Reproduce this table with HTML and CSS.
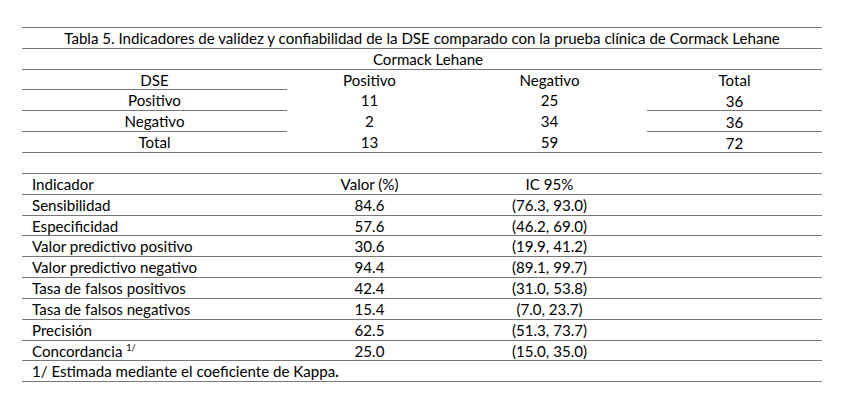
FILE: index.html
```html
<!DOCTYPE html>
<html lang="es">
<head>
<meta charset="utf-8">
<title>Tabla 5</title>
<link rel="stylesheet" href="styles.css">
</head>
<body>
<main class="page">
  <section class="tbl t1">
    <div class="row title">Tabla 5. Indicadores de validez y confiabilidad de la DSE comparado con la prueba clínica de Cormack Lehane</div>
    <div class="row span">Cormack Lehane</div>
    <div class="grid">
      <div class="cell c line">DSE</div>
      <div class="cell c">Positivo</div>
      <div class="cell c">Negativo</div>
      <div class="cell c">Total</div>

      <div class="cell c line">Positivo</div>
      <div class="cell c">11</div>
      <div class="cell c">25</div>
      <div class="cell c line low">36</div>

      <div class="cell c line">Negativo</div>
      <div class="cell c">2</div>
      <div class="cell c">34</div>
      <div class="cell c line low">36</div>

      <div class="cell c line">Total</div>
      <div class="cell c line">13</div>
      <div class="cell c line">59</div>
      <div class="cell c line low">72</div>
    </div>
  </section>

  <section class="tbl t2">
    <div class="grid">
      <div class="cell l line">Indicador</div>
      <div class="cell c line">Valor (%)</div>
      <div class="cell c line">IC 95%</div>
      <div class="cell line"></div>

      <div class="cell l line">Sensibilidad</div>
      <div class="cell c line">84.6</div>
      <div class="cell c line">(76.3, 93.0)</div>
      <div class="cell line"></div>

      <div class="cell l line">Especificidad</div>
      <div class="cell c line">57.6</div>
      <div class="cell c line">(46.2, 69.0)</div>
      <div class="cell line"></div>

      <div class="cell l line">Valor predictivo positivo</div>
      <div class="cell c line">30.6</div>
      <div class="cell c line">(19.9, 41.2)</div>
      <div class="cell line"></div>

      <div class="cell l line">Valor predictivo negativo</div>
      <div class="cell c line">94.4</div>
      <div class="cell c line">(89.1, 99.7)</div>
      <div class="cell line"></div>

      <div class="cell l line">Tasa de falsos positivos</div>
      <div class="cell c line">42.4</div>
      <div class="cell c line">(31.0, 53.8)</div>
      <div class="cell line"></div>

      <div class="cell l line">Tasa de falsos negativos</div>
      <div class="cell c line">15.4</div>
      <div class="cell c line">(7.0, 23.7)</div>
      <div class="cell line"></div>

      <div class="cell l line">Precisión</div>
      <div class="cell c line">62.5</div>
      <div class="cell c line">(51.3, 73.7)</div>
      <div class="cell line"></div>

      <div class="cell l line">Concordancia <sup class="note">1/</sup></div>
      <div class="cell c line">25.0</div>
      <div class="cell c line">(15.0, 35.0)</div>
      <div class="cell line"></div>

      <div class="cell l line full">1/ Estimada mediante el coeficiente de Kappa<b>.</b></div>
    </div>
  </section>
</main>
</body>
</html>
```

FILE: styles.css
```css
* { box-sizing: border-box; }

html, body {
  margin: 0;
  padding: 0;
  background: #ffffff;
}

body {
  font-family: "Lato", "Liberation Sans", sans-serif;
  font-size: 15.1px;
  color: #000000;
}

.page {
  width: 800px;
  margin-left: 22px;
  padding-top: 27px;
  display: flex;
  flex-direction: column;
  gap: 20px;
}

.tbl {
  display: flex;
  flex-direction: column;
}

.row,
.cell {
  height: 20.83px;
  line-height: 20px;
  white-space: nowrap;
  border-bottom: 1px solid transparent;
}

.row {
  width: 100%;
  text-align: center;
  border-bottom-color: #777777;
}

.title {
  border-top: 1px solid #777777;
  height: 21.83px;
}

.span {
  padding-left: 12px;
}

.grid {
  display: grid;
  grid-template-columns: 265px 165px 195px 175px;
}

.t2 .grid {
  border-top: 1px solid #777777;
}

.cell.c { text-align: center; }
.cell.l { text-align: left; padding-left: 10px; }
.cell.line { border-bottom-color: #777777; }
.cell.low { padding-top: 1px; }
.cell.full { grid-column: 1 / -1; }

.note {
  font-size: 9px;
  line-height: 0;
  vertical-align: 6px;
}
```
